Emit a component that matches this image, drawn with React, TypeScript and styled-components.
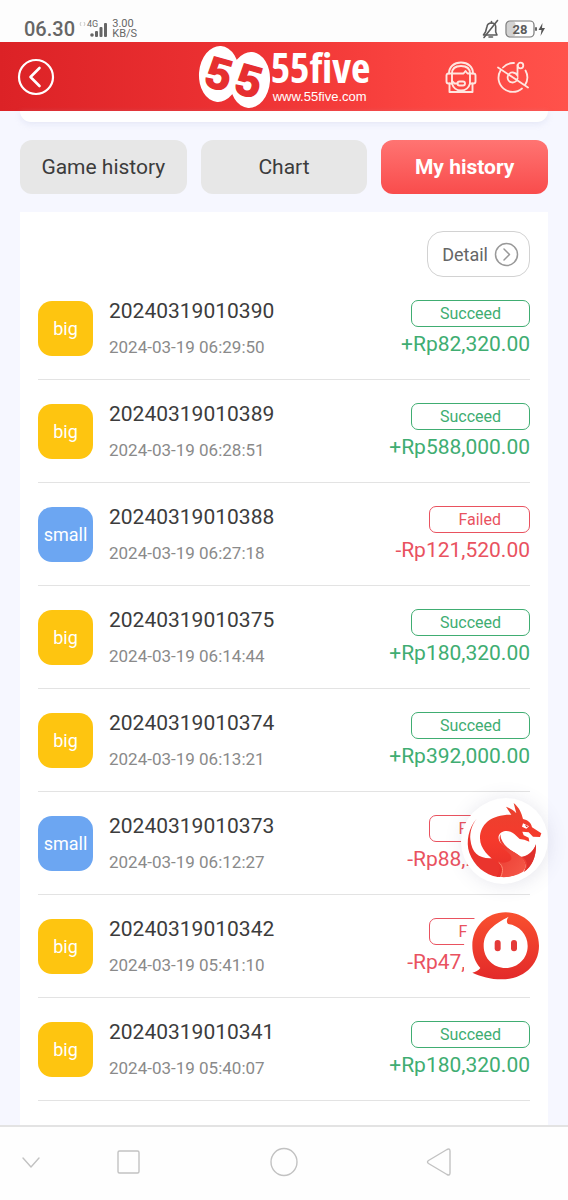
import React from "react";
import styled, { createGlobalStyle, css } from "styled-components";

const GlobalStyle = createGlobalStyle`
  *, *::before, *::after { box-sizing: border-box; }
  body {
    margin: 0;
    background: #f6f7ff;
    color: #3c3c3c;
    font-family: Roboto, "Liberation Sans", sans-serif;
  }
  button { font: inherit; color: inherit; cursor: pointer; }
  a { color: inherit; text-decoration: none; }
`;

const Page = styled.div`
  min-height: 100vh;
  display: flex;
  flex-direction: column;
`;

/* ---------- phone status bar ---------- */

const StatusBar = styled.div`
  height: 42px;
  flex: none;
  display: flex;
  justify-content: space-between;
  padding: 17px 22px 0 24px;
  background: #fdfdfd;
  color: #666;
`;

const StatusGroup = styled.div<{ $gap: number }>`
  display: flex;
  align-items: center;
  height: 24px;
  gap: ${(p) => p.$gap}px;
`;

const Clock = styled.span`
  font-size: 20px;
  font-weight: 500;
  line-height: 24px;
`;

const Network = styled.span`
  display: flex;
  align-items: flex-start;
  height: 20px;
`;

const Generation = styled.span`
  font-size: 9px;
  line-height: 10px;
`;

const SignalBars = styled.svg`
  margin-left: -8px;
`;

const Speed = styled.span`
  font-size: 11px;
  line-height: 10px;
`;

/* ---------- app header ---------- */

const Header = styled.header`
  height: 69px;
  flex: none;
  display: grid;
  grid-template-columns: 1fr auto 1fr;
  align-items: center;
  padding: 0 17px;
  background: linear-gradient(90deg, #dc2226 0%, #ee3334 45%, #fb4541 75%, #ff524b 100%);
  color: #fff;
`;

const IconButton = styled.button`
  display: flex;
  padding: 0;
  border: 0;
  background: none;
`;

const HeaderActions = styled.div`
  display: flex;
  justify-content: flex-end;
  gap: 20px;
  padding-right: 22px;
`;

const Logo = styled.a`
  display: flex;
  align-items: center;
  height: 69px;
`;

const LogoText = styled.span`
  display: flex;
  flex-direction: column;
`;

const LogoName = styled.span`
  font-family: "Open Sans Condensed", "Liberation Sans Narrow", Roboto, sans-serif;
  font-size: 42px;
  line-height: 40px;
  font-weight: 700;
`;

const LogoUrl = styled.span`
  padding-left: 2px;
  font-family: "Liberation Sans", sans-serif;
  font-size: 13px;
  line-height: 20px;
`;

/* ---------- content ---------- */

const Main = styled.main`
  flex: 1;
  display: flex;
  flex-direction: column;
  padding: 0 20px;
`;

const CardEnd = styled.div`
  height: 11px;
  flex: none;
  border-radius: 0 0 14px 14px;
  background: #fff;
  box-shadow: 0 2px 6px rgba(190, 195, 225, 0.3);
`;

const Tabs = styled.div`
  display: grid;
  grid-template-columns: repeat(3, 1fr);
  gap: 14px;
  padding: 18px 0;
`;

const Tab = styled.button<{ $active?: boolean }>`
  height: 54px;
  padding: 0;
  border: 0;
  border-radius: 12px;
  background: #e7e7e7;
  font-size: 21px;
  line-height: 24px;
  ${(p) =>
    p.$active &&
    css`
      background: linear-gradient(180deg, #ff7472, #f94c4c);
      color: #fff;
      font-weight: 700;
    `}
`;

const Panel = styled.section`
  flex: 1;
  padding: 19px 18px 23px;
  background: #fff;
  display: flex;
  flex-direction: column;
`;

const DetailButton = styled.button`
  align-self: flex-end;
  display: flex;
  align-items: center;
  gap: 6px;
  height: 46px;
  padding: 0 10px 0 14px;
  border: 1px solid #d2d2d2;
  border-radius: 16px;
  background: #fff;
  color: #666;
  font-size: 18px;
`;

const List = styled.ul`
  margin: 0;
  padding: 0;
  list-style: none;
`;

const Row = styled.li`
  display: flex;
  align-items: center;
  gap: 16px;
  height: 103px;
  border-bottom: 1px solid #e3e3e3;
`;

const Badge = styled.span<{ $kind: Kind }>`
  flex: none;
  display: flex;
  align-items: center;
  justify-content: center;
  width: 55px;
  height: 55px;
  border-radius: 14px;
  background: ${(p) => (p.$kind === "big" ? "#fec510" : "#6ca6f2")};
  color: #fff;
  font-size: 18px;
`;

const Info = styled.div`
  flex: 1;
  display: flex;
  flex-direction: column;
  gap: 14px;
`;

const Issue = styled.span`
  font-size: 21px;
  line-height: 24px;
`;

const Time = styled.time`
  color: #8a8a8a;
  font-size: 17px;
  line-height: 20px;
`;

const Result = styled.div<{ $won: boolean }>`
  display: flex;
  flex-direction: column;
  align-items: flex-end;
  gap: 5px;
  color: ${(p) => (p.$won ? "#40ad72" : "#e9525f")};
`;

const Status = styled.span`
  height: 27px;
  padding: 0 28px;
  border: 1px solid currentColor;
  border-radius: 7px;
  font-size: 16px;
  line-height: 25px;
`;

const Amount = styled.span`
  font-size: 21px;
  line-height: 24px;
`;

/* ---------- floating buttons and system navigation ---------- */

const Floating = styled.div`
  position: fixed;
  right: 20px;
  bottom: 212px;
  display: flex;
  flex-direction: column;
  gap: 22px;
`;

const FloatButton = styled.button<{ $raised?: boolean }>`
  display: flex;
  width: 84px;
  height: 84px;
  padding: 0;
  border: 0;
  border-radius: ${(p) => (p.$raised ? "50%" : "50% 50% 50% 12px")};
  background: #fff;
  box-shadow: ${(p) => (p.$raised ? "-3px 2px 0 #fff, 0 2px 20px rgba(90, 90, 130, 0.16)" : "none")};
`;

const NavBar = styled.nav`
  flex: none;
  height: 75px;
  display: grid;
  grid-template-columns: 62px 134px 1fr 134px 62px;
  align-items: center;
  justify-items: center;
  padding-bottom: 4px;
  border-top: 2px solid #e3e3e3;
  background: #fefefe;
`;

type Kind = "big" | "small";

interface Bet {
  issue: string;
  time: string;
  kind: Kind;
  won: boolean;
  amount: string;
}

const bets: Bet[] = [
  { issue: "20240319010390", time: "2024-03-19 06:29:50", kind: "big", won: true, amount: "+Rp82,320.00" },
  { issue: "20240319010389", time: "2024-03-19 06:28:51", kind: "big", won: true, amount: "+Rp588,000.00" },
  { issue: "20240319010388", time: "2024-03-19 06:27:18", kind: "small", won: false, amount: "-Rp121,520.00" },
  { issue: "20240319010375", time: "2024-03-19 06:14:44", kind: "big", won: true, amount: "+Rp180,320.00" },
  { issue: "20240319010374", time: "2024-03-19 06:13:21", kind: "big", won: true, amount: "+Rp392,000.00" },
  { issue: "20240319010373", time: "2024-03-19 06:12:27", kind: "small", won: false, amount: "-Rp88,200.00" },
  { issue: "20240319010342", time: "2024-03-19 05:41:10", kind: "big", won: false, amount: "-Rp47,040.00" },
  { issue: "20240319010341", time: "2024-03-19 05:40:07", kind: "big", won: true, amount: "+Rp180,320.00" },
];

const SignalIcon = () => (
  <SignalBars width="18" height="20" viewBox="0 0 18 20" fill="#666" aria-hidden="true">
    <circle cx="2" cy="16" r="1.8" />
    <rect x="5" y="12" width="3" height="6" rx="1" />
    <rect x="9.500" y="8" width="3" height="10" rx="1" />
    <rect x="14" y="4" width="3" height="14" rx="1" />
  </SignalBars>
);

const BellOffIcon = () => (
  <svg width="17" height="20" viewBox="0 0 17 20" fill="none" stroke="#5c5c5c" strokeWidth="1.6" strokeLinecap="round" strokeLinejoin="round" aria-hidden="true">
    <path d="M1.500 16h13.500l-1.300-3V7.500C13.500 5 12 4 9.500 4S5.500 5 5 7.500L3.500 13z" />
    <path d="M9.500 2.500V4M7 18h3.500M15.500 1.500 2 18.500" />
  </svg>
);

const BatteryIcon = () => (
  <svg width="41" height="18" viewBox="0 0 41 18" aria-hidden="true">
    <rect x="1.500" y="1.500" width="9" height="15" rx="3" fill="#d2d2d2" />
    <rect x="1" y="1" width="28" height="16" rx="4" fill="none" stroke="#777" strokeWidth="1.200" />
    <rect x="30" y="7" width="2" height="4" rx="1" fill="#666" />
    <path d="M37.500 3 33.500 10h3l-1 6 4.500-8h-3z" fill="#555" />
    <text x="15" y="13.500" textAnchor="middle" fontSize="13" fontWeight="700" fill="#5c5c5c">28</text>
  </svg>
);

const BackIcon = () => (
  <svg width="38" height="38" viewBox="0 0 38 38" fill="none" stroke="#fff" aria-hidden="true">
    <circle cx="19" cy="19" r="17" strokeWidth="2.200" />
    <path d="M22.500 10 13.500 19l9 9" strokeWidth="2.600" strokeLinecap="round" strokeLinejoin="round" />
  </svg>
);

const LogoMark = () => (
  <svg width="73" height="64" viewBox="0 0 73 64" aria-hidden="true">
    <g fill="#fff">
      <ellipse cx="21" cy="29" rx="20" ry="28" transform="rotate(4 21 29)" />
      <ellipse cx="52" cy="35" rx="20" ry="28" transform="rotate(4 52 35)" />
    </g>
    <g fill="#e62f30" stroke="#e62f30" strokeWidth="1.500" fontFamily="Liberation Sans, sans-serif" fontWeight="700" fontSize="44" textAnchor="middle">
      <text x="21" y="44" transform="rotate(16 21 29)">5</text>
      <text x="51" y="51" transform="rotate(16 51 36)">5</text>
    </g>
  </svg>
);

const SupportIcon = () => (
  <svg width="32" height="32" viewBox="0 0 32 32" fill="none" stroke="#ffe6e0" strokeWidth="1.900" strokeLinejoin="round" strokeLinecap="round" aria-hidden="true">
    <path d="M4 12.500C4 6 9 1.500 16 1.500S28 6 28 12.500" />
    <path d="M7 12.500c0-5 3.500-7.500 9-7.500s9 2.500 9 7.500" />
    <path d="M7 12.500H3.500c-1.500 0-2 1-2 2v6c0 1 .500 2 2 2H7zM25 12.500h3.500c1.500 0 2 1 2 2v6c0 1-.500 2-2 2H25z" />
    <path d="M7 12.500h11.500l2-2.500 2 2.500H25M7 22.500c1 4 4.500 7 9 7s8-3 9-7" />
    <path d="M4.500 22.500V31h23v-8.500" />
    <rect x="12.500" y="20.500" width="7.500" height="4" rx="2" />
    <path d="M12.500 22.500H9.500L7 20" />
  </svg>
);

const MusicOffIcon = () => (
  <svg width="32" height="32" viewBox="0 0 32 32" fill="none" stroke="#ffe6e0" strokeWidth="1.800" strokeLinecap="round" aria-hidden="true">
    <path d="M17 2A14.200 14.200 0 0 0 6 6.500M3.500 9.500A14.200 14.200 0 0 0 25 27.500M28 24a14.200 14.200 0 0 0 .500-14.500" />
    <path d="M20.500 17.500A5 5 0 1 1 16 11.500q3 .300 4.500 3V4" />
    <circle cx="23.500" cy="4.500" r="2.800" />
    <path d="M1 6.500 31 26.500" />
  </svg>
);

const ChevronCircle = () => (
  <svg width="25" height="25" viewBox="0 0 25 25" fill="none" stroke="#999" strokeWidth="1.500" strokeLinecap="round" strokeLinejoin="round" aria-hidden="true">
    <circle cx="12.500" cy="12.500" r="11" />
    <path d="m10 7 5.500 5.500L10 18" />
  </svg>
);

const DragonIcon = () => (
  <svg width="84" height="84" viewBox="72 54 252 252" aria-hidden="true">
    <defs>
      <linearGradient id="dragonBody" x1="0" y1="0" x2="0" y2="1">
        <stop offset="0" stopColor="#e9422f" />
        <stop offset="0.500" stopColor="#f63a2c" />
        <stop offset="1" stopColor="#e52f2a" />
      </linearGradient>
      <linearGradient id="dragonTail" x1="0" y1="0" x2="1" y2="1">
        <stop offset="0" stopColor="#ea3b31" />
        <stop offset="1" stopColor="#f65a4a" />
      </linearGradient>
    </defs>
    <path d="M110 116C86 143 77 185 88 218c13 38 47 67 86 73 13-14 14-29 2-43 0-5-8-12-14-14-42 4-66-10-71-56-2-22 5-44 19-62z" fill="#ea342d" />
    <path d="M214 104 198 80c13 5 24 11 31 20l-8-31c17 14 24 31 28 48 14 3 24 10 27 25l28 18-4 11-21-1-13-13-19-2 4 11 15 7 2 12-15-6-14-2-16-15c-12-10-27-12-38-5-16 10-10 28 5 39l40 27c20 14 26 30 16 49-21 17-49 22-76 18 9-17 10-31-2-43-20-18-48-39-48-72 0-43 34-72 94-71z" fill="url(#dragonBody)" />
    <path d="M181 163c-7 18 2 31 17 41l42 28c16 12 22 28 10 45 24-16 38-45 38-82-12 23-26 34-45 35-28-17-60-34-62-67z" fill="#ee4035" />
    <path d="M176 198c31 10 75 27 80 54 2 10-2 18-8 24-20 12-43 17-67 15 8-17 7-32-3-44 13 3 31 0 36-9 5-13-17-27-38-40z" fill="url(#dragonTail)" />
    <path d="M176 247c13 11 15 25 6 44" fill="none" stroke="#ff8c72" strokeWidth="3" />
    <path d="M288 192c-8 23-23 37-41 39 17 12 19 31 4 45 25-16 38-44 37-84z" fill="#df302c" />
    <path d="m249 130 18 9-8 7-13-6z" fill="#fff" />
    <path d="m255 134 9 5-5 3z" fill="#d92727" />
  </svg>
);

const ChatIcon = () => (
  <svg width="84" height="84" viewBox="72 42 252 252" aria-hidden="true">
    <defs>
      <linearGradient id="chatRing" x1="0" y1="0" x2="0" y2="1">
        <stop offset="0" stopColor="#f9502f" />
        <stop offset="1" stopColor="#e32a2a" />
      </linearGradient>
    </defs>
    <path d="M197 67c57 0 100 43 100 100 0 59-48 101-112 101-34 0-61-8-88-20 10-2 18-6 24-14-16-18-24-41-24-67 0-57 43-100 100-100z" fill="url(#chatRing)" />
    <path d="M206 80c-7 9-7 15-2 22 34 4 59 32 59 66 0 37-29 66-66 66s-66-29-66-66c0-44 31-65 75-88z" fill="#fff" />
    <rect x="164" y="150" width="18" height="34" rx="9" fill="#e43a38" />
    <rect x="213" y="150" width="18" height="34" rx="9" fill="#e43a38" />
  </svg>
);

const NavIcon = ({ d }: { d: string }) => (
  <svg width="32" height="32" viewBox="0 0 32 32" fill="none" stroke="#c2c2c2" strokeWidth="1.400" strokeLinecap="round" strokeLinejoin="round" aria-hidden="true">
    <path d={d} />
  </svg>
);

const navItems = [
  { label: "Hide", d: "M8 12l8 9 8-9" },
  { label: "Recent apps", d: "M6.500 5h18a1.500 1.500 0 0 1 1.500 1.500v19a1.500 1.500 0 0 1-1.500 1.500h-18A1.500 1.500 0 0 1 5 25.500v-19A1.500 1.500 0 0 1 6.500 5z" },
  { label: "Home", d: "M16 2.500a13 13.500 0 1 1 0 27a13 13.500 0 1 1 0-27z" },
  { label: "Back", d: "M5.500 14.500 24 3.500q3-1.500 3 1.500v22q0 3-3 1.500L5.500 17.500q-2-1.500 0-3z" },
];

export default function App() {
  return (
    <Page>
      <GlobalStyle />
      <StatusBar>
        <StatusGroup $gap={4}>
          <Clock>06.30</Clock>
          <Network>
            <svg width="8" height="10" viewBox="0 0 8 10" fill="none" stroke="#c8c8c8" aria-hidden="true">
              <path d="M2 3 1 5l1 2M5 3l1 2-1 2" />
            </svg>
            <Generation>4G</Generation>
            <SignalIcon />
          </Network>
          <Speed>
            3.00
            <br />
            KB/S
          </Speed>
        </StatusGroup>
        <StatusGroup $gap={6}>
          <BellOffIcon />
          <BatteryIcon />
        </StatusGroup>
      </StatusBar>

      <Header>
        <IconButton aria-label="Back">
          <BackIcon />
        </IconButton>
        <Logo href="#" aria-label="55five">
          <LogoMark />
          <LogoText>
            <LogoName>55five</LogoName>
            <LogoUrl>www.55five.com</LogoUrl>
          </LogoText>
        </Logo>
        <HeaderActions>
          <IconButton aria-label="Customer service">
            <SupportIcon />
          </IconButton>
          <IconButton aria-label="Toggle music">
            <MusicOffIcon />
          </IconButton>
        </HeaderActions>
      </Header>

      <Main>
        <CardEnd />
        <Tabs>
          <Tab>Game history</Tab>
          <Tab>Chart</Tab>
          <Tab $active>My history</Tab>
        </Tabs>
        <Panel>
          <DetailButton>
            Detail
            <ChevronCircle />
          </DetailButton>
          <List>
            {bets.map((bet) => (
              <Row key={bet.issue}>
                <Badge $kind={bet.kind}>{bet.kind}</Badge>
                <Info>
                  <Issue>{bet.issue}</Issue>
                  <Time>{bet.time}</Time>
                </Info>
                <Result $won={bet.won}>
                  <Status>{bet.won ? "Succeed" : "Failed"}</Status>
                  <Amount>{bet.amount}</Amount>
                </Result>
              </Row>
            ))}
          </List>
        </Panel>
      </Main>

      <NavBar>
        {navItems.map((item) => (
          <IconButton key={item.label} aria-label={item.label}>
            <NavIcon d={item.d} />
          </IconButton>
        ))}
      </NavBar>

      <Floating>
        <FloatButton $raised aria-label="Dragon bonus">
          <DragonIcon />
        </FloatButton>
        <FloatButton aria-label="Open chat">
          <ChatIcon />
        </FloatButton>
      </Floating>
    </Page>
  );
}
